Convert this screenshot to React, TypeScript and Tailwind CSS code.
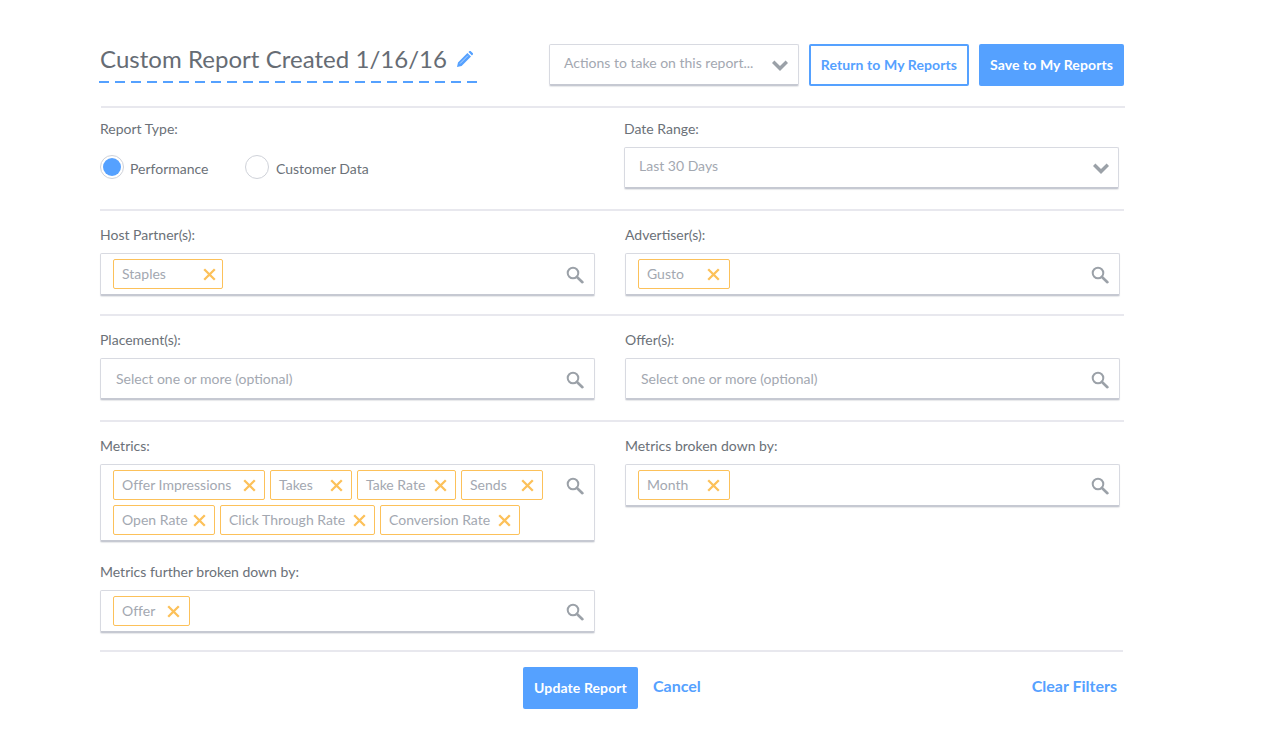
import React from "react";

function SearchIcon() {
  return (
    <svg width="18" height="18" viewBox="0 0 18 18" fill="none" className="shrink-0">
      <circle cx="7" cy="7" r="5.3" stroke="#9ba1a8" strokeWidth="2" />
      <path d="M11 11l5.4 5.2" stroke="#9ba1a8" strokeWidth="2.6" strokeLinecap="round" />
    </svg>
  );
}

function XIcon() {
  return (
    <svg width="13" height="13" viewBox="0 0 13 13" fill="none" className="shrink-0">
      <path d="M1.2 1.2l10.6 10.6M11.8 1.2L1.2 11.8" stroke="#fcc15a" strokeWidth="2.3" />
    </svg>
  );
}

function Chevron({ className }: { className: string }) {
  return (
    <svg width="16" height="11" viewBox="0 0 16 11" className={className}>
      <path d="M2.4 0.6L8 6.1 13.6 0.6 16 3 8 11 0 3z" fill="#9ba1a8" />
    </svg>
  );
}

function Pencil() {
  return (
    <svg width="16" height="16" viewBox="0 0 16 16" className="ml-[10px] mt-[7px] shrink-0">
      <path d="M0 16l1-4.6L10.4 2l3.6 3.6L4.6 15z M11.5 1l1-1c.4-.3.8-.3 1.1 0l2.3 2.3c.3.3.3.8 0 1.1l-1 1z" fill="#55a1ff" />
      <path d="M3 12.6l8-8" stroke="#ffffff" strokeWidth="0.8" opacity="0.7" />
    </svg>
  );
}

function Pill({ label, width, pad = "pr-[8px]" }: { label: string; width: string; pad?: string }) {
  return (
    <span className={`${width} ${pad} h-[30px] flex items-center justify-between pl-2 border border-[#fcc15a] rounded-[2px] text-[14px] tracking-[0.01px] text-[#a3a8b1] whitespace-nowrap bg-white`}>
      <span className="-mt-px">{label}</span>
      <XIcon />
    </span>
  );
}

function SearchBox({ children, placeholder }: { children?: React.ReactNode; placeholder?: string }) {
  return (
    <div className="flex items-start justify-between border border-[#d8dae1] border-b-2 border-b-[#c6c9d2] rounded-[2px] shadow-[0_1px_1px_rgba(120,125,140,0.18)] bg-white pl-3 pr-[10px] py-[5px] min-h-[42px]">
      {placeholder ? (
        <span className="h-[30px] pl-[3px] -mt-px flex items-center text-[14px] text-[#a3a8b1]">{placeholder}</span>
      ) : (
        <div className="flex flex-wrap gap-[5px] w-[440px]">{children}</div>
      )}
      <span className="mt-[7px]"><SearchIcon /></span>
    </div>
  );
}

function Label({ children }: { children: React.ReactNode }) {
  return <div className="text-[14px] leading-[18px] text-[#6b7178]">{children}</div>;
}

function Hr({ className }: { className: string }) {
  return <div className={`${className} h-[2px] bg-[#e8e8ee]`} />;
}

function Field({ label, children, className = "" }: { label: string; children: React.ReactNode; className?: string }) {
  return (
    <div className={`${className} w-[495px]`}>
      <Label>{label}</Label>
      <div className="mt-[9px]">{children}</div>
    </div>
  );
}

export default function App() {
  return (
    <div className="w-[1261px] h-[744px] bg-white overflow-hidden pl-[100px] pt-[44px] font-['Lato','Open_Sans',sans-serif]">
      <div className="w-[1025px]">
        <div className="flex items-start h-[42px]">
          <div className="w-[449px]">
            <div className="flex items-start h-[37px]">
              <span className="text-[24px] leading-[30px] tracking-[0.04px] text-[#666c74] whitespace-nowrap">Custom Report Created 1/16/16</span>
              <Pencil />
            </div>
            <div className="-ml-px w-[378px] h-[2px] bg-[repeating-linear-gradient(90deg,#55a1ff_0,#55a1ff_10px,transparent_10px,transparent_16px)]" />
          </div>
          <div className="w-[250px] h-[42px] flex justify-between pl-[14px] pr-[10px] pt-[9px] border border-[#d8dae1] border-b-2 border-b-[#c6c9d2] rounded-[2px] shadow-[0_1px_1px_rgba(120,125,140,0.18)] text-[14px] leading-[18px] text-[#a3a8b1]">
            <span>Actions to take on this report...</span>
            <Chevron className="mt-[6px]" />
          </div>
          <button className="ml-[10px] w-[160px] h-[42px] pb-[2px] border-2 border-[#55a1ff] rounded-[2px] text-[14px] tracking-[0.1px] font-bold text-[#55a1ff]">Return to My Reports</button>
          <button className="ml-[10px] w-[145px] h-[42px] pb-[2px] bg-[#55a1ff] rounded-[2px] text-[14px] tracking-[0.1px] font-bold text-white">Save to My Reports</button>
        </div>

        <Hr className="mt-[20px] ml-px w-[1024px]" />

        <div className="flex mt-[12px] h-[76px]">
          <div className="w-[524px]">
            <Label>Report Type:</Label>
            <div className="flex items-center mt-[17px] text-[14px] text-[#6b7178]">
              <span className="w-[24px] h-[24px] rounded-full border border-[#cfd2d9] flex items-center justify-center">
                <span className="w-[18px] h-[18px] rounded-full bg-[#55a1ff]" />
              </span>
              <span className="ml-[6px] w-[115px] mt-[2px]">Performance</span>
              <span className="w-[24px] h-[24px] rounded-full border border-[#cfd2d9]" />
              <span className="ml-[7px] mt-[2px]">Customer Data</span>
            </div>
          </div>
          <div className="w-[495px]">
            <Label>Date Range:</Label>
            <div className="mt-[9px] h-[42px] flex justify-between pl-[14px] pr-[9px] pt-[9px] border border-[#d8dae1] border-b-2 border-b-[#c6c9d2] rounded-[2px] shadow-[0_1px_1px_rgba(120,125,140,0.18)] text-[14px] leading-[18px] text-[#a3a8b1]">
              <span>Last 30 Days</span>
              <Chevron className="mt-[6px]" />
            </div>
          </div>
        </div>

        <Hr className="mt-[13px] w-[1024px]" />

        <div className="flex gap-[30px] mt-[15px]">
          <Field label="Host Partner(s):">
            <SearchBox><Pill label="Staples" width="w-[110px]" pad="pr-[6px]" /></SearchBox>
          </Field>
          <Field label="Advertiser(s):">
            <SearchBox><Pill label="Gusto" width="w-[92px]" pad="pr-[9px]" /></SearchBox>
          </Field>
        </div>

        <Hr className="mt-[18px] w-[1024px]" />

        <div className="flex gap-[30px] mt-[15px]">
          <Field label="Placement(s):"><SearchBox placeholder="Select one or more (optional)" /></Field>
          <Field label="Offer(s):"><SearchBox placeholder="Select one or more (optional)" /></Field>
        </div>

        <Hr className="mt-[20px] w-[1024px]" />

        <div className="flex gap-[30px] mt-[15px]">
          <div>
            <Field label="Metrics:">
              <SearchBox>
                <Pill label="Offer Impressions" width="w-[152px]" />
                <Pill label="Takes" width="w-[82px]" />
                <Pill label="Take Rate" width="w-[99px]" />
                <Pill label="Sends" width="w-[82px]" />
                <Pill label="Open Rate" width="w-[102px]" />
                <Pill label="Click Through Rate" width="w-[155px]" />
                <Pill label="Conversion Rate" width="w-[140px]" />
              </SearchBox>
            </Field>
            <Field label="Metrics further broken down by:" className="mt-[21px]">
              <SearchBox><Pill label="Offer" width="w-[77px]" pad="pr-[9px]" /></SearchBox>
            </Field>
          </div>
          <Field label="Metrics broken down by:">
            <SearchBox><Pill label="Month" width="w-[92px]" pad="pr-[9px]" /></SearchBox>
          </Field>
        </div>

        <Hr className="mt-[17px] w-[1023px]" />

        <div className="flex items-start mt-[15px]">
          <button className="ml-[423px] w-[115px] h-[42px] pb-[2px] bg-[#55a1ff] rounded-[2px] text-[14px] tracking-[0.1px] font-bold text-white">Update Report</button>
          <span className="ml-[15px] mt-[9px] text-[16px] leading-[20px] font-bold text-[#55a1ff]">Cancel</span>
          <span className="ml-auto mr-[8px] mt-[9px] text-[16px] leading-[20px] font-bold text-[#55a1ff]">Clear Filters</span>
        </div>
      </div>
    </div>
  );
}
